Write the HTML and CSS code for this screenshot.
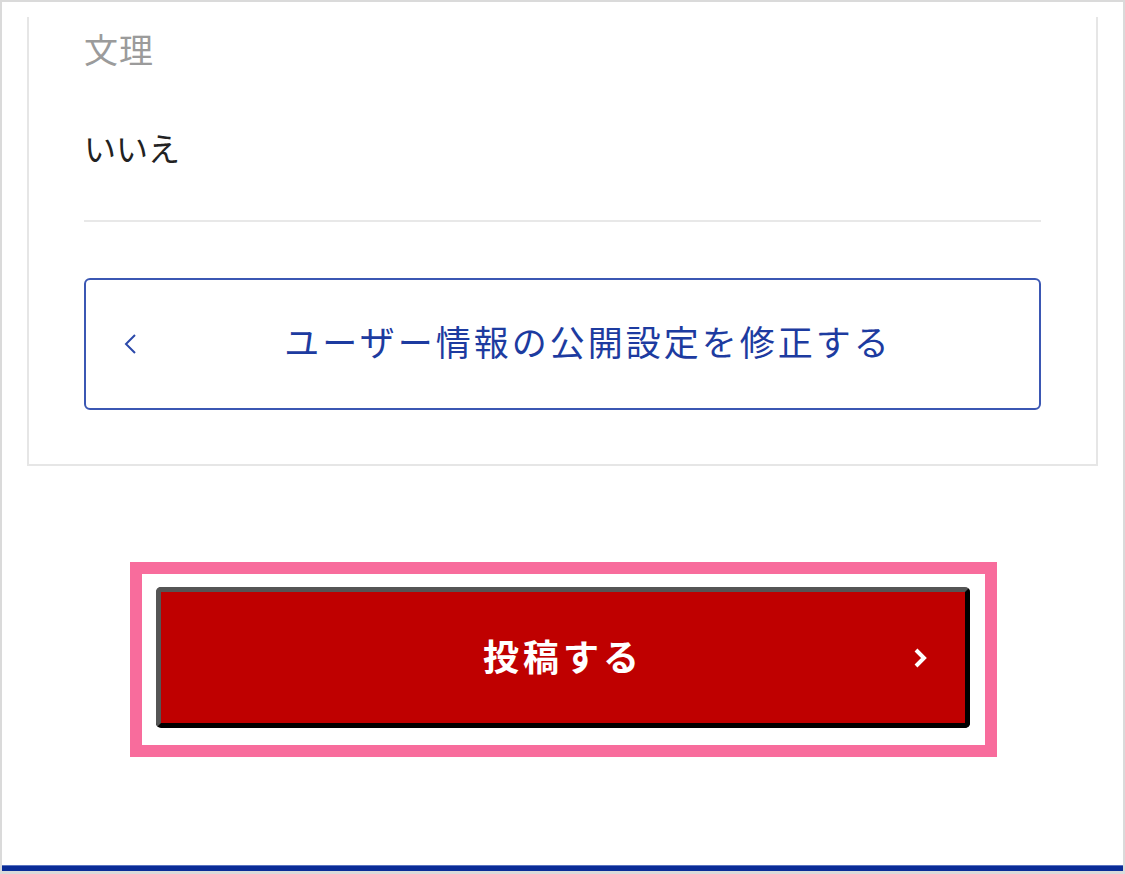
FILE: index.html
```html
<!DOCTYPE html>
<html lang="ja">
<head>
    <meta charset="UTF-8">
    <meta name="viewport" content="width=device-width, initial-scale=1.0">
    <title>投稿確認</title>
    <link rel="stylesheet" href="styles.css">
</head>
<body>

    <div class="frame">

        <!-- Profile summary card -->
        <div class="card">
            <div class="label">文理</div>
            <div class="value">いいえ</div>

            <!-- Back to edit button -->
            <button class="edit-btn">
                <svg class="edit-icon" width="14" height="22" viewBox="0 0 14 22">
                    <polyline points="12,2 3,11 12,20" fill="none" stroke="#2b49aa" stroke-width="2"/>
                </svg>
                <span class="edit-text">ユーザー情報の公開設定を修正する</span>
            </button>
        </div>

        <!-- Submit area (highlighted) -->
        <div class="highlight">
            <button class="submit-btn">
                <span></span>
                <span class="submit-text">投稿する</span>
                <svg class="submit-icon" width="16" height="22" viewBox="0 0 16 22">
                    <polyline points="3,3 11,11 3,19" fill="none" stroke="#fff" stroke-width="4"/>
                </svg>
            </button>
        </div>

        <div class="footer-bar"></div>
    </div>

</body>
</html>
```

FILE: styles.css
```css
/* General Reset */
html, body {
    margin: 0;
    padding: 0;
    font-family: "Noto Sans CJK JP", "Noto Sans", sans-serif;
    background: #fff;
}

/* Outer screenshot frame */
.frame {
    height: 874px;
    box-sizing: border-box;
    border: 2px solid #dadada;
    border-bottom-width: 3px;
    display: flex;
    flex-direction: column;
}

/* Card */
.card {
    margin: 15px 25px 0;
    padding: 0 55px 54px;
    border: 2px solid #e6e6e6;
    border-top: none;
}

.label {
    font-size: 34px;
    line-height: 64px;
    color: #9b9b9b;
    letter-spacing: 1px;
}

.value {
    margin-top: 34px;
    padding-bottom: 41px;
    font-size: 32px;
    line-height: 64px;
    color: #222;
    border-bottom: 2px solid #e8e8e8;
}

/* Outline button */
.edit-btn {
    display: flex;
    align-items: center;
    width: 100%;
    height: 132px;
    margin-top: 56px;
    padding: 0 0 8px 37px;
    background: #fff;
    border: 2px solid #3b57b3;
    border-radius: 6px;
    font-family: inherit;
    cursor: pointer;
}

.edit-icon {
    flex: none;
    margin-top: 8px;
}

.edit-text {
    flex: 1;
    text-align: center;
    font-size: 35px;
    letter-spacing: 3px;
    color: #1d3ba0;
}

/* Pink highlight box */
.highlight {
    width: 867px;
    box-sizing: border-box;
    margin: 96px 0 0 128px;
    padding: 13px 15px 17px 14px;
    border: 12px solid #f86c9c;
}

/* Submit button */
.submit-btn {
    display: grid;
    grid-template-columns: 1fr auto 1fr;
    align-items: center;
    width: 100%;
    height: 141px;
    padding: 0 0 6px;
    background: #bf0000;
    border: 5px solid #000;
    border-top-color: #555;
    border-left-color: #555;
    border-radius: 5px;
    font-family: inherit;
    cursor: pointer;
}

.submit-text {
    font-size: 36px;
    font-weight: bold;
    letter-spacing: 4px;
    color: #fff;
}

.submit-icon {
    justify-self: end;
    margin: 6px 36px 0 0;
}

/* Bottom blue bar */
.footer-bar {
    margin-top: auto;
    height: 6px;
    background: #0a2c97;
    border-top: 1px solid #5a73c0;
    box-sizing: border-box;
}
```
